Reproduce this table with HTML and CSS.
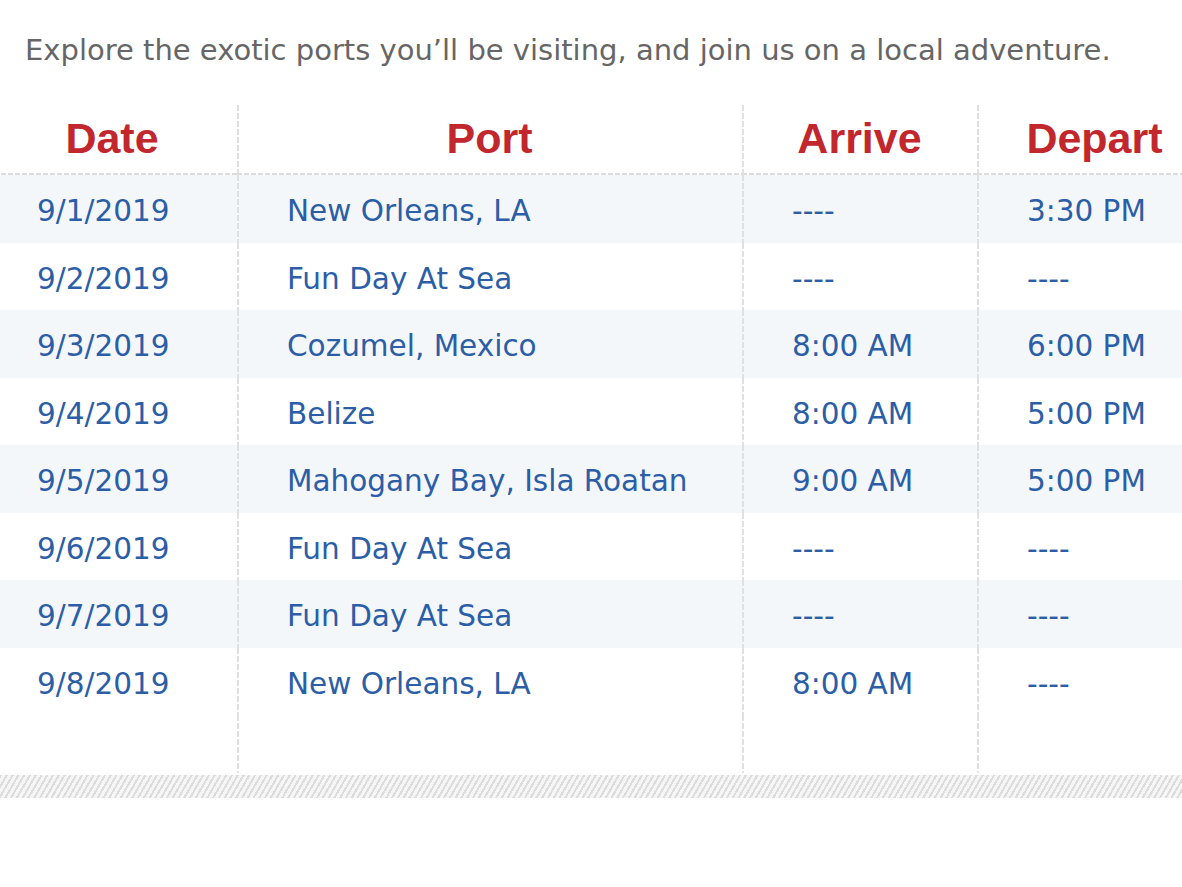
FILE: index.html
```html
<!DOCTYPE html>
<html lang="en">
<head>
<meta charset="utf-8">
<title>Itinerary</title>
<link rel="stylesheet" href="styles.css">
</head>
<body>
<div class="page">
  <p class="intro">Explore the exotic ports you’ll be visiting, and join us on a local adventure.</p>
  <div class="table-wrap">
    <table class="itinerary">
      <colgroup>
        <col class="c-date"><col class="c-port"><col class="c-arrive"><col class="c-depart">
      </colgroup>
      <thead>
        <tr><th>Date</th><th>Port</th><th>Arrive</th><th>Depart</th></tr>
      </thead>
      <tbody>
        <tr><td>9/1/2019</td><td>New Orleans, LA</td><td>----</td><td>3:30 PM</td></tr>
        <tr><td>9/2/2019</td><td>Fun Day At Sea</td><td>----</td><td>----</td></tr>
        <tr><td>9/3/2019</td><td>Cozumel, Mexico</td><td>8:00 AM</td><td>6:00 PM</td></tr>
        <tr><td>9/4/2019</td><td>Belize</td><td>8:00 AM</td><td>5:00 PM</td></tr>
        <tr><td>9/5/2019</td><td>Mahogany Bay, Isla Roatan</td><td>9:00 AM</td><td>5:00 PM</td></tr>
        <tr><td>9/6/2019</td><td>Fun Day At Sea</td><td>----</td><td>----</td></tr>
        <tr><td>9/7/2019</td><td>Fun Day At Sea</td><td>----</td><td>----</td></tr>
        <tr><td>9/8/2019</td><td>New Orleans, LA</td><td>8:00 AM</td><td>----</td></tr>
        <tr class="spacer"><td></td><td></td><td></td><td></td></tr>
      </tbody>
    </table>
  </div>
  <div class="hatch"></div>
</div>
</body>
</html>
```
FILE: styles.css
```css
html, body {
  margin: 0;
  padding: 0;
  background: #fff;
  overflow: hidden;
}

.page {
  width: 1182px;
  overflow: hidden;
  font-family: "DejaVu Sans", Verdana, sans-serif;
}

.intro {
  margin: 0;
  padding: 33px 0 0 25px;
  height: 105px;
  box-sizing: border-box;
  font-size: 29px;
  line-height: 34px;
  color: #666;
  white-space: nowrap;
}

.table-wrap {
  margin-left: -13px;
  width: 1225px;
}

.itinerary {
  width: 1225px;
  border-collapse: collapse;
  table-layout: fixed;
}

.c-date { width: 250px; }
.c-port { width: 505px; }
.c-arrive { width: 235px; }
.c-depart { width: 235px; }

.itinerary th {
  height: 66px;
  padding: 0 0 4px;
  font-family: "Liberation Sans", Arial, sans-serif;
  font-weight: bold;
  font-size: 43px;
  color: #c1272d;
  text-align: center;
  vertical-align: middle;
  background-image:
    repeating-linear-gradient(to right, #dcdcdc 0 5px, transparent 5px 7px);
  background-size: 100% 2px;
  background-position: left bottom;
  background-repeat: no-repeat;
}

.itinerary th + th {
  background-image:
    repeating-linear-gradient(to bottom, #e0e0e0 0 6px, transparent 6px 8px),
    repeating-linear-gradient(to right, #dcdcdc 0 5px, transparent 5px 7px);
  background-size: 2px 100%, 100% 2px;
  background-position: left top, left bottom;
  background-repeat: no-repeat, no-repeat;
}

.itinerary td {
  height: 67.5px;
  box-sizing: border-box;
  padding: 5px 0 0 50px;
  font-size: 29.5px;
  color: #2b5ea6;
  text-align: left;
  vertical-align: middle;
  white-space: nowrap;
}

.itinerary td + td {
  background-image: repeating-linear-gradient(to bottom, #e0e0e0 0 6px, transparent 6px 8px);
  background-size: 2px 100%;
  background-position: left top;
  background-repeat: no-repeat;
}

.itinerary tbody tr:nth-child(odd) td {
  background-color: #f4f7fa;
}

.itinerary tbody tr.spacer td {
  background-color: #fff;
  height: 58px;
}

.hatch {
  height: 23px;
  margin-top: 2px;
  background: repeating-linear-gradient(120deg, #dcdcdc 0 2px, #f6f6f6 2px 5px);
}
```
